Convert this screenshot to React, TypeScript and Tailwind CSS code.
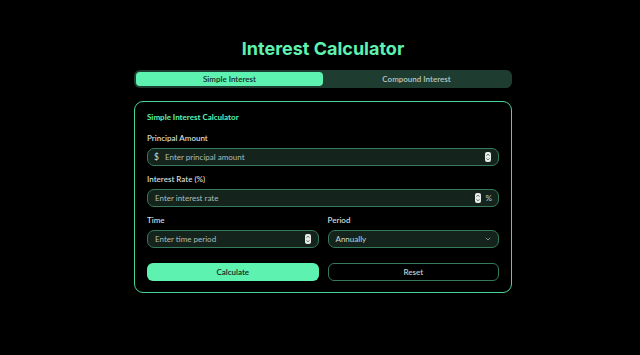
import React from "react";

const Spinner = () => (
  <svg width="6" height="10" viewBox="0 0 6 10" className="shrink-0">
    <rect x="0" y="0" width="6" height="10" rx="2" fill="#e8ece9" />
    <path d="M1.6 3.6 L3 2.2 L4.4 3.6" stroke="#3a4a42" strokeWidth="0.9" fill="none" />
    <path d="M1.6 6.4 L3 7.8 L4.4 6.4" stroke="#3a4a42" strokeWidth="0.9" fill="none" />
  </svg>
);

const Label = ({ children }: { children: React.ReactNode }) => (
  <div className="h-[10px] text-[8px] leading-[10px] font-semibold text-[#d4ddd8]">{children}</div>
);

const inputBox =
  "h-[18px] rounded-[7px] border border-[#347a5b] bg-[#14241d] flex items-center text-[8px] text-[#aebdb5]";

export default function App() {
  return (
    <div
      className="min-h-[355px] w-full bg-black pt-[37px] pl-[6px]"
      style={{ fontFamily: "Lato, 'Liberation Sans', sans-serif" }}
    >
      <div className="mx-auto w-[378px] flex flex-col">
        <h1
          className="h-[24px] text-center text-[18px] leading-[24px] font-bold text-[#5ef2b0]"
          style={{ fontFamily: "Inter, 'Liberation Sans', sans-serif" }}
        >
          Interest Calculator
        </h1>
        <div className="mt-[9px] h-[18px] rounded-[6px] bg-[#1f3c30] p-[2px] flex">
          <div className="flex-1 rounded-[4px] bg-[#5ef2b0] flex items-center justify-center text-[8px] font-semibold text-[#15261e]">
            Simple Interest
          </div>
          <div className="flex-1 rounded-[4px] flex items-center justify-center text-[8px] font-semibold text-[#b9c7c0]">
            Compound Interest
          </div>
        </div>
        <div className="mt-[13px] rounded-[9px] border border-[#45d69a] px-[12px] pt-[10px] pb-[11px] flex flex-col">
          <div className="h-[10px] text-[8px] leading-[10px] font-bold text-[#5ef2b0]">
            Simple Interest Calculator
          </div>
          <div className="mt-[11px] flex flex-col gap-[5px]">
            <Label>Principal Amount</Label>
            <div className={inputBox + " pl-[6px] pr-[7px]"}>
              <span className="text-[8.5px] text-[#d4ddd8] w-[11px]">$</span>
              <span className="flex-1">Enter principal amount</span>
              <Spinner />
            </div>
          </div>
          <div className="mt-[8px] flex flex-col gap-[5px]">
            <Label>Interest Rate (%)</Label>
            <div className={inputBox + " pl-[7px] pr-[6px]"}>
              <span className="flex-1">Enter interest rate</span>
              <Spinner />
              <span className="ml-[5px] text-[8px] text-[#c2cec8]">%</span>
            </div>
          </div>
          <div className="mt-[8px] grid grid-cols-2 gap-x-[9px]">
            <div className="flex flex-col gap-[5px]">
              <Label>Time</Label>
              <div className={inputBox + " pl-[7px] pr-[7px]"}>
                <span className="flex-1">Enter time period</span>
                <Spinner />
              </div>
            </div>
            <div className="flex flex-col gap-[5px]">
              <Label>Period</Label>
              <div className={inputBox + " pl-[7px] pr-[7px]"}>
                <span className="flex-1 text-[#cdd8d2]">Annually</span>
                <svg width="6" height="4" viewBox="0 0 6 4">
                  <path d="M0.8 0.8 L3 3 L5.2 0.8" stroke="#8a9a92" strokeWidth="0.9" fill="none" />
                </svg>
              </div>
            </div>
          </div>
          <div className="mt-[15px] grid grid-cols-2 gap-x-[9px]">
            <button className="h-[18px] rounded-[6px] bg-[#5ef2b0] text-[8px] font-semibold text-[#15261e] flex items-center justify-center">
              Calculate
            </button>
            <button className="h-[18px] rounded-[6px] border border-[#347a5b] text-[8px] font-semibold text-[#c2cec8] flex items-center justify-center">
              Reset
            </button>
          </div>
        </div>
      </div>
    </div>
  );
}
